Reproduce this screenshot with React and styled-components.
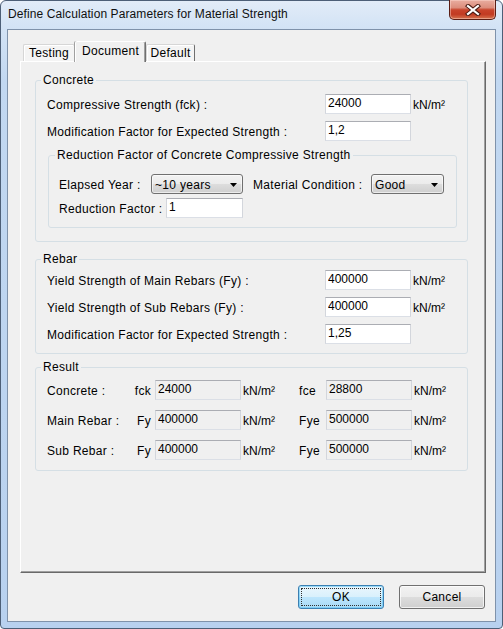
import React from 'react';
import styled, { createGlobalStyle } from 'styled-components';

const Global = createGlobalStyle`
  html, body { margin: 0; padding: 0; width: 503px; height: 629px; overflow: hidden; background: #ffffff; }
  body { font-family: "Liberation Sans", Arial, sans-serif; font-size: 12px; color: #000; }
  #root { width: 503px; height: 629px; }
  * { box-sizing: border-box; }
`;

const Window = styled.div`
  width: 503px;
  height: 629px;
  display: flex;
  flex-direction: column;
  border: 1px solid #4d5f77;
  border-radius: 6px 6px 4px 4px;
  background: linear-gradient(to bottom, #e2ecf8 0px, #d3e3f5 26px, #c2d8f1 80px, #b8d1ef 100%);
  padding: 0 6px 6px 6px;
`;

const TitleBar = styled.div`
  height: 28px;
  flex: none;
  display: flex;
  justify-content: space-between;
  align-items: flex-start;
`;

const Title = styled.div`
  padding: 6px 0 0 1px;
  line-height: 14px;
  font-size: 12px;
  letter-spacing: 0.1px;
  color: #101010;
`;

const CloseButton = styled.div`
  margin-top: -1px;
  width: 47px;
  height: 20px;
  border: 1px solid #5a1d14;
  border-top: none;
  border-radius: 0 0 5px 5px;
  background: linear-gradient(to bottom, #e9ada0 0%, #dc8d7c 40%, #c8442c 52%, #c23a22 75%, #d5734f 100%);
  display: flex;
  align-items: center;
  justify-content: center;
  box-shadow: inset 0 0 0 1px rgba(255, 220, 210, 0.45);
`;

const Client = styled.div`
  flex: 1;
  display: flex;
  flex-direction: column;
  border: 1px solid #7f92aa;
  background: #f0f0f0;
  padding: 11px 9px 12px 12px;
  letter-spacing: 0.3px;
`;

const TabStrip = styled.div`
  height: 20px;
  flex: none;
  display: flex;
  align-items: flex-end;
  padding-left: 3px;
  position: relative;
  z-index: 1;
`;

const Tab = styled.div`
  width: ${p => p.$w}px;
  height: ${p => (p.$active ? 21 : 17)}px;
  margin-bottom: ${p => (p.$active ? -1 : 0)}px;
  display: flex;
  align-items: ${p => (p.$active ? 'flex-start' : 'center')};
  padding-top: ${p => (p.$active ? 2 : 0)}px;
  justify-content: center;
  background: ${p => (p.$active ? '#f0f0f0' : '#f4f4f4')};
  border-top: 1px solid ${p => (p.$active ? '#ffffff' : '#d6d6d6')};
  border-left: 1px solid ${p => (p.$active ? '#ffffff' : '#d6d6d6')};
  border-right: 1px solid #6f6f6f;
  border-radius: 2px 2px 0 0;
  box-shadow: ${p => (p.$active ? 'inset -1px 0 0 #a0a0a0, -1px 0 0 #a0a0a0' : 'inset 1px 1px 0 #ffffff')};
  line-height: 14px;
  font-size: 12px;
`;

const Panel = styled.div`
  flex: 1;
  display: flex;
  flex-direction: column;
  border-style: solid;
  border-width: 1px;
  border-color: #ffffff #696969 #696969 #ffffff;
  box-shadow: inset -1px -1px 0 #a0a0a0;
  padding: 11px 17px 0 14px;
`;

const Group = styled.fieldset`
  margin: ${p => p.$m || '0'};
  padding: ${p => p.$pad};
  border: 1px solid #d5dfe5;
  border-radius: 3px;
  min-width: 0;
`;

const Legend = styled.legend`
  padding: 0 2px;
  margin-left: ${p => p.$ml || -6}px;
  line-height: 14px;
  font-size: 12px;
`;

const Rows = styled.div`
  display: flex;
  flex-direction: column;
  gap: ${p => p.$gap}px;
  padding-top: ${p => p.$top}px;
`;

const Row = styled.div`
  display: flex;
  align-items: center;
  height: 20px;
`;

const Label = styled.div`
  width: ${p => p.$w}px;
  margin-left: ${p => p.$ml || 0}px;
  flex: none;
  white-space: nowrap;
  line-height: 14px;
  padding-top: 1px;
`;

const TextBox = styled.input`
  width: ${p => p.$w || 86}px;
  height: 20px;
  flex: none;
  margin: 0;
  padding: 0 2px 2px 2px;
  border: 1px solid;
  border-color: #abadb3 #d3d6dc #dbdfe6 #d3d6dc;
  background: ${p => (p.readOnly ? '#f0f0f0' : '#ffffff')};
  font-family: "Liberation Sans", Arial, sans-serif;
  font-size: 12px;
  letter-spacing: 0;
  color: #000;
  outline: none;
`;

const Unit = styled.span`
  margin-left: 2px;
  white-space: nowrap;
  padding-top: 1px;
  letter-spacing: 0;
`;

const Combo = styled.div`
  width: ${p => p.$w}px;
  height: 20px;
  flex: none;
  display: flex;
  align-items: center;
  justify-content: space-between;
  padding: 1px 5px 0 3px;
  border: 1px solid #707070;
  border-radius: 3px;
  background: linear-gradient(to bottom, #f2f2f2 0%, #ebebeb 50%, #dddddd 50%, #cfcfcf 100%);
  box-shadow: inset 0 0 0 1px rgba(255, 255, 255, 0.6);
`;

const ResultRow = styled.div`
  display: grid;
  grid-template-columns: 83px 25px 86px 57px 28px 86px auto;
  align-items: center;
  height: 20px;
`;

const Sym = styled.div`
  text-align: ${p => (p.$left ? 'left' : 'right')};
  padding: ${p => (p.$left ? '1px 0 0 1px' : '1px 4px 0 0')};
`;

const ResUnit = styled.div`
  padding-left: 2px;
  padding-top: 1px;
  letter-spacing: 0;
`;

const ButtonRow = styled.div`
  flex: none;
  display: flex;
  justify-content: flex-end;
  gap: 15px;
  margin-top: 12px;
  padding-right: 1px;
`;

const Button = styled.div`
  width: 86px;
  height: 24px;
  display: flex;
  align-items: center;
  justify-content: center;
  padding: 2px;
  border: 1px solid ${p => (p.$default ? '#3c7fb1' : '#707070')};
  border-radius: 3px;
  background: ${p =>
    p.$default
      ? 'linear-gradient(to bottom, #eaf6fd 0%, #d9f0fc 50%, #bee6fd 50%, #a7d9f5 100%)'
      : 'linear-gradient(to bottom, #f2f2f2 0%, #ebebeb 50%, #dddddd 50%, #cfcfcf 100%)'};
  box-shadow: inset 0 0 0 1px ${p => (p.$default ? 'rgba(100,200,245,0.6)' : 'rgba(255,255,255,0.7)')};
  font-size: 12px;
`;

const Focus = styled.div`
  width: 100%;
  height: 100%;
  display: flex;
  align-items: center;
  justify-content: center;
  border: 1px dotted ${p => (p.$on ? '#303030' : 'transparent')};
`;

const Arrow = () => (
  <svg width="7" height="4" viewBox="0 0 7 4"><path d="M0 0h7L3.5 4z" fill="#000" /></svg>
);

const CloseIcon = () => (
  <svg width="16" height="12" viewBox="0 0 16 12">
    <path d="M3 2l10 8M13 2L3 10" stroke="#4a1a12" strokeWidth="4.2" strokeLinecap="square" />
    <path d="M3 2l10 8M13 2L3 10" stroke="#ffffff" strokeWidth="2.2" strokeLinecap="square" />
  </svg>
);

const MainRow = ({ label, value, unit }) => (
  <Row>
    <Label $w={278}>{label}</Label>
    <TextBox defaultValue={value} />
    {unit && <Unit>kN/m²</Unit>}
  </Row>
);

const ResRow = ({ label, s1, v1, s2, v2 }) => (
  <ResultRow>
    <Label $w={83}>{label}</Label>
    <Sym>{s1}</Sym>
    <TextBox readOnly value={v1} />
    <ResUnit>kN/m²</ResUnit>
    <Sym $left>{s2}</Sym>
    <TextBox readOnly value={v2} />
    <ResUnit>kN/m²</ResUnit>
  </ResultRow>
);

export default function App() {
  return (
    <>
      <Global />
      <Window>
        <TitleBar>
          <Title>Define Calculation Parameters for Material Strength</Title>
          <CloseButton><CloseIcon /></CloseButton>
        </TitleBar>
        <Client>
          <TabStrip>
            <Tab $w={52}>Testing</Tab>
            <Tab $w={71} $active>Document</Tab>
            <Tab $w={49}>Default</Tab>
          </TabStrip>
          <Panel>
            <Group $pad="0 0 13px 11px">
              <Legend>Concrete</Legend>
              <Rows $gap={7} $top={7}>
                <MainRow label="Compressive Strength (fck) :" value="24000" unit />
                <MainRow label="Modification Factor for Expected Strength :" value="1,2" />
                <Group $m="0 10px 0 1px" $pad="0 0 9px 10px">
                  <Legend $ml={-4}>Reduction Factor of Concrete Compressive Strength</Legend>
                  <Rows $gap={4} $top={12}>
                    <Row>
                      <Label $w={92}>Elapsed Year :</Label>
                      <Combo $w={92}><span>~10 years</span><Arrow /></Combo>
                      <Label $w={118} $ml={10}>Material Condition :</Label>
                      <Combo $w={73}><span>Good</span><Arrow /></Combo>
                    </Row>
                    <Row>
                      <Label $w={107}>Reduction Factor :</Label>
                      <TextBox $w={77} defaultValue="1" />
                    </Row>
                  </Rows>
                </Group>
              </Rows>
            </Group>
            <Group $m="10px 0 0 0" $pad="0 0 9px 11px">
              <Legend>Rebar</Legend>
              <Rows $gap={7} $top={4}>
                <MainRow label="Yield Strength of Main Rebars (Fy) :" value="400000" unit />
                <MainRow label="Yield Strength of Sub Rebars (Fy) :" value="400000" unit />
                <MainRow label="Modification Factor for Expected Strength :" value="1,25" />
              </Rows>
            </Group>
            <Group $m="6px 0 0 0" $pad="0 0 10px 11px">
              <Legend>Result</Legend>
              <Rows $gap={10} $top={6}>
                <ResRow label="Concrete :" s1="fck" v1="24000" s2="fce" v2="28800" />
                <ResRow label="Main Rebar :" s1="Fy" v1="400000" s2="Fye" v2="500000" />
                <ResRow label="Sub Rebar :" s1="Fy" v1="400000" s2="Fye" v2="500000" />
              </Rows>
            </Group>
          </Panel>
          <ButtonRow>
            <Button $default><Focus $on>OK</Focus></Button>
            <Button><Focus>Cancel</Focus></Button>
          </ButtonRow>
        </Client>
      </Window>
    </>
  );
}
